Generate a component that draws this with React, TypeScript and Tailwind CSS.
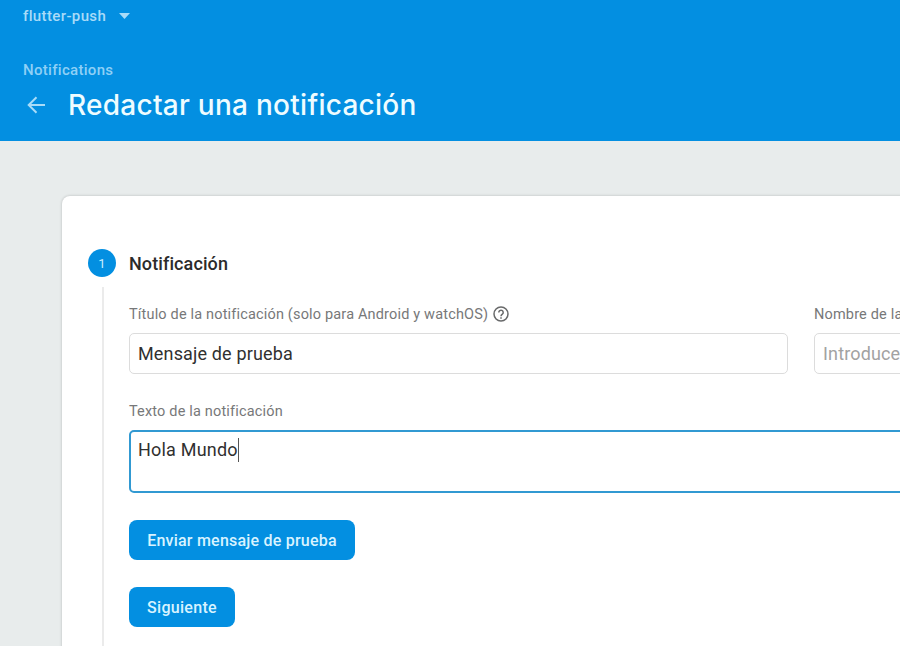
import React from 'react';

function Field({ label, children }: { label: React.ReactNode; children: React.ReactNode }) {
  return (
    <div>
      <div className="flex h-[20px] items-center whitespace-nowrap pt-px text-[14.5px] tracking-[0.17px] text-[#777879]">{label}</div>
      {children}
    </div>
  );
}

function HelpIcon() {
  return (
    <svg className="-mt-px ml-[5px]" width="16" height="16" viewBox="0 0 16 16" fill="none" stroke="#68696a" strokeWidth="1.5">
      <circle cx="8" cy="8" r="7" />
      <path d="M5.800 6.400a2.200 2.200 0 1 1 3.700 1.600C8.600 8.700 8 9.100 8 10.300M8 11.200v1.500" />
    </svg>
  );
}

export default function App() {
  return (
    <div className="h-[646px] w-[900px] overflow-hidden bg-[#e8ecec] font-[Roboto,sans-serif]">
      <header className="h-[141px] bg-[#038fe1] pl-[23px] text-white">
        <div className="flex h-[33px] items-center text-[15px] font-medium text-[#a9dbf8]">
          <span className="w-[96px] tracking-[0.37px]">flutter-push</span>
          <svg className="-mt-0.5" width="11" height="6" viewBox="0 0 11 6"><path d="M0 0h11L5.500 6z" fill="currentColor" /></svg>
        </div>
        <div className="mt-[27px] h-[20px] text-[15px] font-medium leading-[20px] tracking-[0.3px] text-[#8fd0f6]">Notifications</div>
        <div className="flex h-[50px] items-center">
          <svg className="mr-[23px]" width="22" height="20" viewBox="0 0 22 20" fill="none" stroke="#a9dcf8" strokeWidth="2"><path d="M22 10H6M13.500 2.200L5.700 10l7.800 7.800" /></svg>
          <h1 className="whitespace-nowrap font-[Inter,sans-serif] text-[28px] font-medium tracking-[0.27px] text-[#eefcff]">Redactar una notificación</h1>
        </div>
      </header>
      <main className="ml-[62px] mt-[55px] h-[460px] w-[850px] rounded-lg bg-white pl-[26px] pt-[53px] shadow-[0_0_3px_rgba(0,0,0,0.22)]">
        <div className="flex">
          <div className="flex w-[41px] flex-col">
            <div className="flex size-7 items-center justify-center rounded-full bg-[#038fe1] pt-px text-[13px] text-[#c8edff]">1</div>
            <div className="ml-[14px] mt-[10px] h-[380px] w-0.5 bg-[#ebebeb]" />
          </div>
          <section className="w-[780px] shrink-0">
            <h2 className="h-[55px] pt-px text-[18px] font-medium leading-[28px] tracking-[0.1px] text-[#2b2b2b]">Notificación</h2>
            <div className="flex gap-[26px]">
              <div className="w-[659px] shrink-0">
                <Field label={<><span>Título de la notificación (solo para Android y watchOS)</span><HelpIcon /></>}>
                  <div className="mt-[9px] flex h-[41px] items-center rounded-[5px] border border-[#dcdcdc] px-2 text-[18px] tracking-[0.15px] text-[#303030]">Mensaje de prueba</div>
                </Field>
              </div>
              <div className="w-[300px] shrink-0">
                <Field label="Nombre de la">
                  <div className="mt-[9px] flex h-[41px] items-center rounded-[5px] border border-[#dcdcdc] px-2 text-[18px] tracking-[0.15px] text-[#a2a2a2]">Introduce</div>
                </Field>
              </div>
            </div>
            <div className="mt-[27px]">
              <Field label="Texto de la notificación">
                <div className="mt-[9px] flex h-[63px] items-start rounded-[5px] border-2 border-[#3199d2] px-[7px] pt-[6px] text-[18px] leading-[24px] tracking-[0.2px] text-[#303030]">Hola Mundo<span className="h-[24px] w-px bg-[#555]" /></div>
              </Field>
            </div>
            <button className="mt-[27px] block h-10 w-[226px] rounded-lg bg-[#038fe1] pt-px text-[16px] font-medium tracking-[0.22px] text-[#d8f3ff]">Enviar mensaje de prueba</button>
            <button className="mt-[27px] block h-10 w-[106px] rounded-lg bg-[#038fe1] pt-px text-[16px] font-medium tracking-[0.3px] text-[#d8f3ff]">Siguiente</button>
          </section>
        </div>
      </main>
    </div>
  );
}
